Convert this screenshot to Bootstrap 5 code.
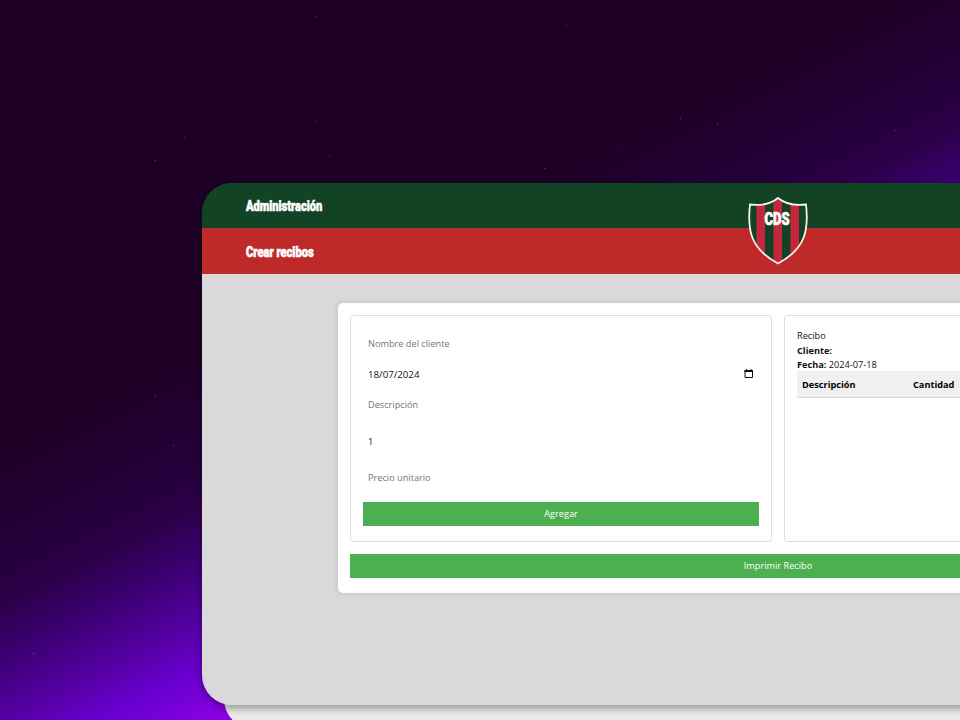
<!DOCTYPE html>
<html lang="es">
<head>
<meta charset="utf-8">
<meta name="viewport" content="width=device-width, initial-scale=1">
<title>Crear recibos</title>
<link href="https://cdn.jsdelivr.net/npm/bootstrap@5.3.0/dist/css/bootstrap.min.css" rel="stylesheet">
<style>
html,body{height:720px;overflow:hidden}
body{font-family:"Open Sans","Noto Sans",sans-serif;font-size:9.2px;line-height:14.5px;color:#111;
 background:linear-gradient(153.43deg,#1e0026 400px,#25003a 500px,#2c0049 540px,#3a006e 585px,#5700aa 650px,#6c00d3 695px,#8b00e3 740px)}
.scene{height:720px;overflow:hidden;padding:183px 0 0 202px}
.sky{inset:0;width:960px;height:720px;pointer-events:none}
.window{width:1152px;height:522px;border-radius:30px;background:linear-gradient(#124324 45px,#d9d9d9 45px);overflow:hidden}
.behind{left:224px;top:600px;width:1108px;height:129px;border-radius:30px;background:#e9eaea}
.front{box-shadow:0 3px 8px rgba(0,0,0,.4);border-radius:30px;width:1152px}
.bar-green{height:45px;background:#124324}
.bar-red{height:46px;background:#be2a2a}
.heading{font-family:"Roboto","Liberation Sans",sans-serif;font-weight:900;font-size:14px;line-height:20px;color:#fff;transform-origin:0 50%;white-space:nowrap;-webkit-text-stroke:.6px #fff}
.h-admin{transform:scaleX(.79)}
.h-crear{transform:translateY(1px) scaleX(.795)}
.inset-x{padding-left:44px}
.shield{left:545px;top:12px;width:62px;height:72px}
.sheet{width:880px;height:290px;margin-top:29px;padding:12px;border-radius:5px;background:#fff;box-shadow:0 0 6px rgba(0,0,0,.12)}
.panes{height:227px;gap:12px}
.pane{width:422px;border:1px solid #dedede;border-radius:3px;padding:12px}
.pane-receipt{padding-top:13px}
.field{padding:0 5px;line-height:15px;color:#757575}
.field.filled{color:#111}
.date-value{font-size:9.7px}
.f1{margin-top:8px}.f2{margin-top:16px}.f3{margin-top:15px}.f4{margin-top:21.500px}.f5{margin-top:21.500px}
.btn-go{display:block;width:100%;height:24px;padding:0;border:0;border-radius:0;background:#4caf50;color:#fff;font-size:9.2px;line-height:24px}
.btn-go:hover{background:#45a049;color:#fff}
.g1{margin-top:17px}.g2{margin-top:12px}
.items{margin:-1.500px 0 0;width:396px}
.items th{background:#f0f0f0;border-bottom:1px solid #d8d8d8;padding:6px 5px 4px;line-height:15px;height:26px;color:#000}
.col-desc{width:111px}
</style>
<script src="https://cdn.jsdelivr.net/npm/bootstrap@5.3.0/dist/js/bootstrap.bundle.min.js"></script>
</head>
<body>
<div class="scene position-relative">
  <svg class="sky position-absolute" viewBox="0 0 960 720" fill="#8a7c98" fill-opacity=".5">
    <circle cx="315.500" cy="17" r=".7"/><circle cx="566" cy="26" r=".7"/><circle cx="315.500" cy="122" r=".7"/><circle cx="185" cy="137.500" r=".7"/><circle cx="155" cy="160.500" r=".7"/><circle cx="330" cy="156.500" r=".7"/><circle cx="545" cy="168.500" r=".7"/><circle cx="618" cy="146" r=".6"/><circle cx="680.500" cy="118.500" r=".7"/><circle cx="717.500" cy="123.500" r=".7"/><circle cx="895" cy="130.500" r=".7"/><circle cx="10" cy="286" r=".6"/><circle cx="155" cy="395.500" r=".7"/><circle cx="173.500" cy="445.500" r=".7"/><circle cx="33.500" cy="653.500" r=".8"/>
  </svg>
  <div class="behind position-absolute"></div>
  <div class="front position-relative">
    <main class="window position-relative">
      <header>
        <div class="bar-green inset-x d-flex align-items-center"><div class="heading h-admin">Administración</div></div>
        <div class="bar-red inset-x d-flex align-items-center"><div class="heading h-crear">Crear recibos</div></div>
        <svg class="shield position-absolute" viewBox="0 0 62 72">
          <defs><clipPath id="crest"><path d="M31 3C25 8 15 11 3 9.500C0 36 4 54 31 68.500C58 54 62 36 59 9.500C47 11 37 8 31 3Z"/></clipPath></defs>
          <g clip-path="url(#crest)">
            <rect width="62" height="72" fill="#124324"/>
            <path d="M9.500 0H18V72H9.500ZM26.500 0H35V72H26.500ZM43.500 0H52V72H43.500Z" fill="#c5283c"/>
          </g>
          <path d="M31 3C25 8 15 11 3 9.500C0 36 4 54 31 68.500C58 54 62 36 59 9.500C47 11 37 8 31 3Z" fill="none" stroke="#f4f4ec" stroke-width="1.800"/>
          <text x="17.500" y="29.500" textLength="25" lengthAdjust="spacingAndGlyphs" font-family="Roboto, sans-serif" font-weight="900" font-size="18" fill="#fff" stroke="#fff" stroke-width=".7">CDS</text>
        </svg>
      </header>
      <section class="sheet mx-auto">
        <div class="panes d-flex">
          <form class="pane">
            <div class="field f1">Nombre del cliente</div>
            <div class="field filled f2 d-flex justify-content-between align-items-center"><span class="date-value">18/07/2024</span>
              <svg width="10" height="11" viewBox="0 0 10 11"><path d="M1 1.500H8.500V8.500H1Z" fill="none" stroke="#111"/><path d="M.5 1H9V3H.5ZM2 0H3V1H2ZM6.500 0H7.500V1H6.500Z" fill="#111"/></svg></div>
            <div class="field f3">Descripción</div>
            <div class="field filled f4">1</div>
            <div class="field f5">Precio unitario</div>
            <button type="button" class="btn btn-go g1">Agregar</button>
          </form>
          <div class="pane pane-receipt">
            <div>Recibo</div>
            <div><b>Cliente:</b></div>
            <div><b>Fecha:</b> 2024-07-18</div>
            <table class="items"><thead><tr><th class="col-desc">Descripción</th><th>Cantidad</th></tr></thead></table>
          </div>
        </div>
        <button type="button" class="btn btn-go g2">Imprimir Recibo</button>
      </section>
    </main>
  </div>
</div>
</body>
</html>
